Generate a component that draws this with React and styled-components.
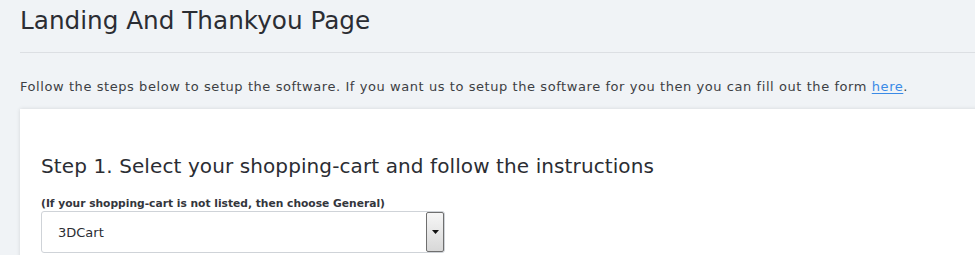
import React from "react";
import styled, { createGlobalStyle } from "styled-components";

const GlobalStyle = createGlobalStyle`
  html, body {
    margin: 0;
    padding: 0;
    background: #f0f3f6;
    overflow: hidden;
  }
  body {
    font-family: "DejaVu Sans", "Open Sans", sans-serif;
    color: #333;
  }
`;

const Page = styled.div`
  padding: 0 0 0 20px;
  width: 975px;
  box-sizing: border-box;
`;

const Header = styled.div`
  border-bottom: 1px solid #dcdfe3;
  padding: 4px 0 14px;
`;

const Title = styled.h1`
  margin: 0;
  font-size: 24.7px;
  font-weight: 400;
  line-height: 34px;
  color: #2b2d33;
`;

const Intro = styled.p`
  margin: 24px 0 0;
  font-size: 13px;
  line-height: 20px;
  letter-spacing: 0.57px;
  color: #3d3f44;

  a {
    color: #3a8ae6;
    text-decoration: underline;
    text-underline-offset: 2px;
  }
`;

const Card = styled.div`
  margin-top: 12px;
  background: #fff;
  box-shadow: 0 0 4px rgba(0, 0, 0, 0.12);
  padding: 44px 21px 0;
  margin-right: -20px;
  min-height: 160px;
`;

const StepTitle = styled.h2`
  margin: 0;
  font-size: 20px;
  font-weight: 400;
  line-height: 26px;
  letter-spacing: 0.1px;
  color: #2b2d33;
`;

const Hint = styled.div`
  margin-top: 18px;
  font-size: 10.7px;
  font-weight: 600;
  line-height: 14px;
  color: #34363c;
`;

const SelectBox = styled.div`
  margin-top: 0;
  width: 404px;
  height: 42px;
  box-sizing: border-box;
  border: 1px solid #cfd3d8;
  border-radius: 3px;
  display: flex;
  align-items: stretch;
  background: #fff;
`;

const SelectValue = styled.div`
  flex: 1;
  display: flex;
  align-items: center;
  padding-left: 16px;
  font-size: 13px;
  color: #2b2d33;
`;

const ArrowButton = styled.div`
  width: 16px;
  border: 1px solid #6f6f6f;
  border-radius: 2px;
  background: linear-gradient(#f6f6f6, #d8d8d8);
  display: flex;
  align-items: center;
  justify-content: center;
`;

export default function App() {
  return (
    <>
      <GlobalStyle />
      <Page>
        <Header>
          <Title>Landing And Thankyou Page</Title>
        </Header>
        <Intro>
          Follow the steps below to setup the software. If you want us to setup
          the software for you then you can fill out the form <a href="#">here</a>.
        </Intro>
        <Card>
          <StepTitle>
            Step 1. Select your shopping-cart and follow the instructions
          </StepTitle>
          <Hint>(If your shopping-cart is not listed, then choose General)</Hint>
          <SelectBox>
            <SelectValue>3DCart</SelectValue>
            <ArrowButton>
              <svg width="7" height="4" viewBox="0 0 7 4">
                <path d="M0 0h7L3.5 4z" fill="#111" />
              </svg>
            </ArrowButton>
          </SelectBox>
        </Card>
      </Page>
    </>
  );
}
